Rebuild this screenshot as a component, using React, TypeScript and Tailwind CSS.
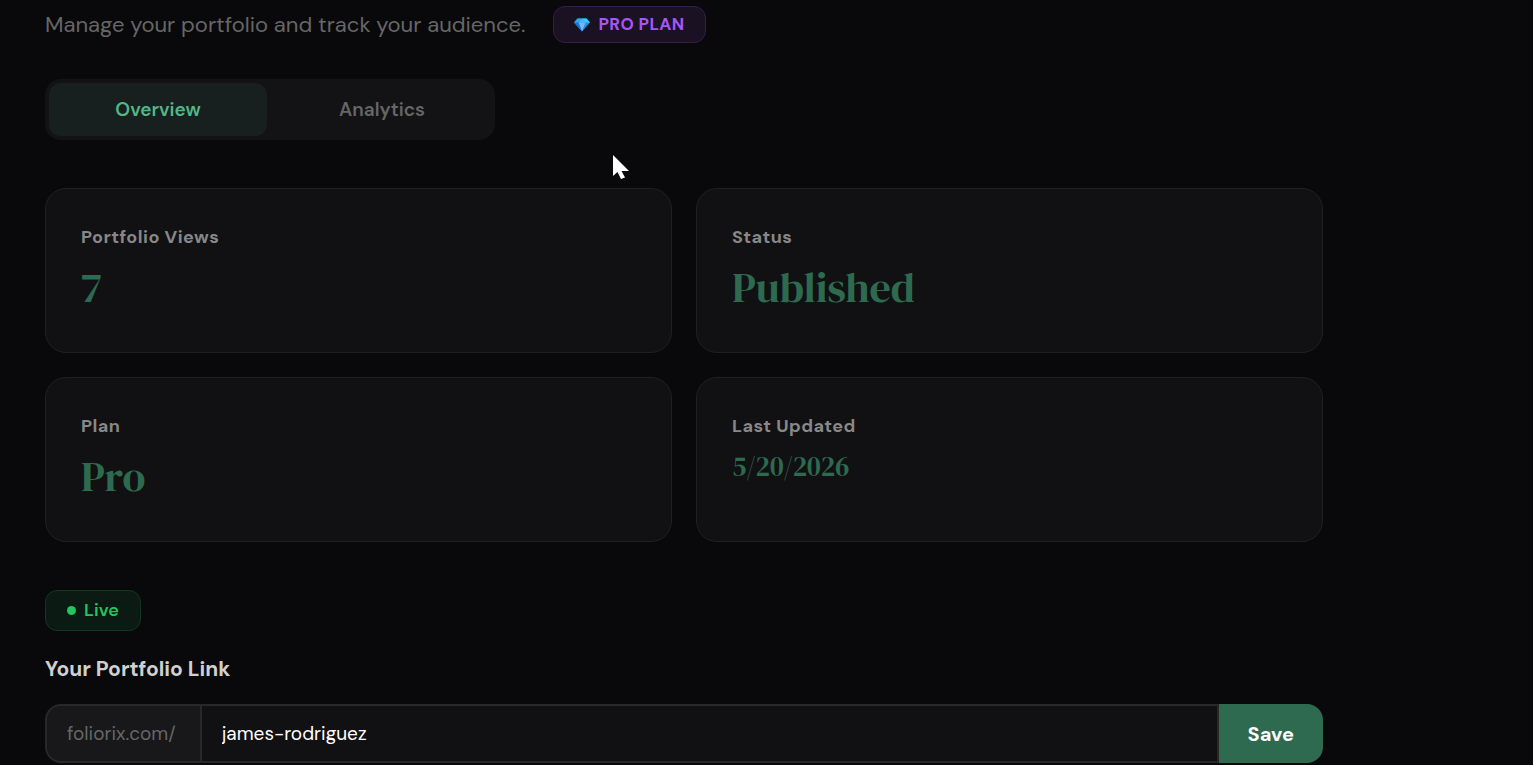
import React, { useState } from 'react';
import { clsx } from 'clsx';

const TABS = ['Overview', 'Analytics'];

const STATS = [
  { label: 'Portfolio Views', value: '7' },
  { label: 'Status', value: 'Published' },
  { label: 'Plan', value: 'Pro' },
  { label: 'Last Updated', value: '5/20/2026', small: true },
];

export default function Dashboard() {
  const [activeTab, setActiveTab] = useState('Overview');
  const [slug, setSlug] = useState('james-rodriguez');

  return (
    <div className="min-h-screen w-full bg-[#09090b] font-['DM_Sans','Inter',sans-serif] text-white">
      <main className="w-full max-w-[1368px] px-[45px] pt-[6px]">
        {/* Header */}
        <header className="flex flex-wrap items-center gap-7">
          <p className="text-[22px] leading-[37px] text-[#666666]">
            Manage your portfolio and track your audience.
          </p>
          <span className="flex items-center gap-2 rounded-xl border border-[#351d4b] bg-[#1a1122] px-5 text-[17px] font-bold leading-[35px] tracking-wide text-[#a855f7]">
            <DiamondIcon />
            PRO PLAN
          </span>
        </header>

        {/* Tabs */}
        <div className="mt-9 grid w-full max-w-[450px] grid-cols-2 gap-[6px] rounded-2xl bg-[#131315] p-1" role="tablist">
          {TABS.map((tab) => (
            <button
              key={tab}
              role="tab"
              aria-selected={activeTab === tab}
              onClick={() => setActiveTab(tab)}
              className={clsx(
                'rounded-xl py-3 text-[19px] font-semibold leading-[29px]',
                activeTab === tab ? 'bg-[#18201f] text-[#52b788]' : 'text-[#666666]'
              )}
            >
              {tab}
            </button>
          ))}
        </div>

        {/* Stats */}
        <div className="mt-12 grid grid-cols-2 gap-6">
          {STATS.map((stat) => (
            <StatCard key={stat.label} {...stat} />
          ))}
        </div>

        {/* Publish status */}
        <div className="mt-12 flex">
          <span className="flex items-center gap-2 rounded-xl border border-[#12371f] bg-[#0b1a12] px-[21px] text-[18px] font-semibold leading-[39px] text-[#22c55e]">
            <span className="size-[9px] rounded-full bg-[#22c55e]" />
            Live
          </span>
        </div>

        {/* Portfolio link */}
        <form className="mt-[22px] pb-[2px]" onSubmit={(e) => e.preventDefault()}>
          <label htmlFor="slug" className="block text-[21px] font-bold leading-[32px] text-[#d0d0d0]">
            Your Portfolio Link
          </label>
          <div className="mt-[19px] flex">
            <span className="rounded-l-2xl border-2 border-r-0 border-[#28282a] bg-[#18181a] pl-5 pr-6 text-[19px] leading-[55px] text-[#666666]">
              foliorix.com/
            </span>
            <input
              id="slug"
              value={slug}
              onChange={(e) => setSlug(e.target.value)}
              className="min-w-0 flex-1 border-2 border-[#28282a] bg-[#111113] px-5 text-[19px] leading-[55px] text-white outline-none"
            />
            <button type="submit" className="rounded-r-2xl bg-[#2d6a4f] px-[29px] text-[20px] font-bold text-white">
              Save
            </button>
          </div>
        </form>
      </main>

      <CursorIcon />
    </div>
  );
}

function StatCard({ label, value, small }: { label: string; value: string; small?: boolean }) {
  return (
    <div className="min-h-[165px] rounded-[21px] border border-[#202022] bg-[#111113] p-[35px]">
      <div className="text-[18px] font-bold leading-[26px] tracking-wide text-[#888888]">{label}</div>
      <div
        className={clsx(
          "mt-3 font-['DM_Serif_Display','Liberation_Serif',serif] text-[#2d6a4f]",
          small ? 'text-[27px] leading-[32px]' : 'text-[42px] leading-[50px]'
        )}
      >
        {value}
      </div>
    </div>
  );
}

function DiamondIcon() {
  return (
    <svg className="h-[14px] w-[16px]" viewBox="0 0 16 14" aria-hidden="true">
      <path d="M3.5 0.5h9L16 4.5 8 13.5 0 4.5z" fill="#258fe0" />
      <path d="M3.5 0.5H8L4.5 4.5H0z" fill="#2fa8ee" />
      <path d="M8 0.5h4.5L16 4.5h-4.5z" fill="#29d3f7" />
      <path d="M8 0.5l3.5 4h-7z" fill="#3fbdf5" />
      <path d="M4.5 4.5h7L8 13.5z" fill="#72b8f8" />
      <path d="M0 4.5h4.5l3.5 9z" fill="#1976cf" />
    </svg>
  );
}

function CursorIcon() {
  return (
    <svg className="pointer-events-none absolute left-[612px] top-[154px] h-[27px] w-[18px]" viewBox="0 0 18 27" aria-hidden="true">
      <path d="M1 1v21l4.5-4 3.500 7 4-1.500-3.500-6.500H17z" fill="#fff" />
    </svg>
  );
}
